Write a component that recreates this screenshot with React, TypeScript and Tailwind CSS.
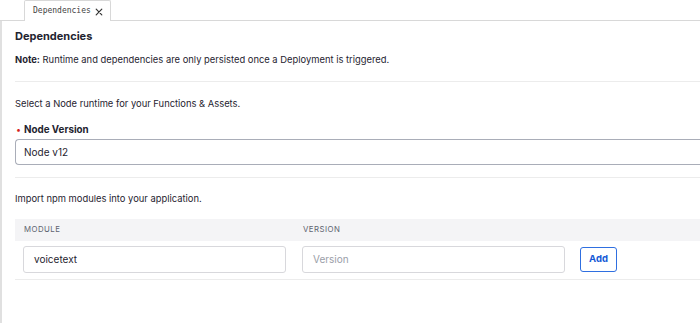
import React from "react";

export default function App() {
  return (
    <div className="w-[700px] h-[323px] bg-white overflow-hidden relative" style={{ fontFamily: "Inter, 'Noto Sans', sans-serif" }}>
      <div className="flex h-[21px] border-b border-[#d8d8d8]">
        <div className="w-[24px]" />
        <div className="w-[87px] h-[21px] border border-b-0 border-[#d8d8d8] bg-white flex items-center pl-[8px] gap-[4px] -mb-px rounded-t-[2px]">
          <span className="text-[8px] text-[#444]" style={{ fontFamily: "'DejaVu Sans Mono', 'Liberation Mono', monospace" }}>Dependencies</span>
          <svg width="8" height="8" viewBox="0 0 10 10" className="mt-[1px]">
            <path d="M1.5 1.5 L8.5 8.5 M8.5 1.5 L1.5 8.5" stroke="#333" strokeWidth="1.5" strokeLinecap="round" />
          </svg>
        </div>
      </div>
      <div className="flex h-[302px]">
        <div className="w-[2px] bg-[#e0e0e0]" />
        <div className="flex-1 pl-[13px]">
          <h1 className="text-[11px] font-bold text-[#1f2430] mt-[7px] leading-[16px]">Dependencies</h1>
          <p className="text-[9.4px] text-[#1f2430] mt-[9px] leading-[14px]"><span className="font-bold">Note:</span> Runtime and dependencies are only persisted once a Deployment is triggered.</p>
          <div className="h-px bg-[#ececec] mt-[14px]" />
          <p className="text-[9.4px] text-[#1f2430] mt-[15px] leading-[14px]">Select a Node runtime for your Functions &amp; Assets.</p>
          <div className="flex items-center mt-[12px] leading-[13px]">
            <span className="text-[#d61f1f] text-[9px] mr-[3px] ml-[1px]">•</span>
            <span className="text-[9.8px] font-bold text-[#1f2430]">Node Version</span>
          </div>
          <div className="mt-[3px] h-[26px] border border-[#a9adb8] rounded-l-[4px] border-r-0 flex items-center pl-[8px] text-[10px] text-[#1f2430]">Node v12</div>
          <div className="h-px bg-[#ececec] mt-[12px]" />
          <p className="text-[9.4px] text-[#1f2430] mt-[14px] leading-[14px]">Import npm modules into your application.</p>
          <div className="mt-[13px] h-[22px] bg-[#f4f4f6] flex items-center text-[7.8px] tracking-[0.06em] text-[#606470]">
            <span className="pl-[9px] w-[288px]">MODULE</span>
            <span>VERSION</span>
          </div>
          <div className="flex items-start h-[39px] border-b border-[#ececec]">
            <div className="mt-[5px] ml-[8px] w-[263px] h-[27px] border border-[#d8d8dc] rounded-[3px] flex items-center pl-[10px] text-[10px] text-[#1f2430]">voicetext</div>
            <div className="mt-[5px] ml-[16px] w-[263px] h-[27px] border border-[#d8d8dc] rounded-[3px] flex items-center pl-[10px] text-[10px] text-[#9a9ea8]">Version</div>
            <div className="mt-[6px] ml-[15px] w-[37px] h-[25px] border border-[#2f6fe0] rounded-[3px] flex items-center justify-center text-[9.5px] font-bold text-[#1459d6]">Add</div>
          </div>
        </div>
      </div>
    </div>
  );
}
